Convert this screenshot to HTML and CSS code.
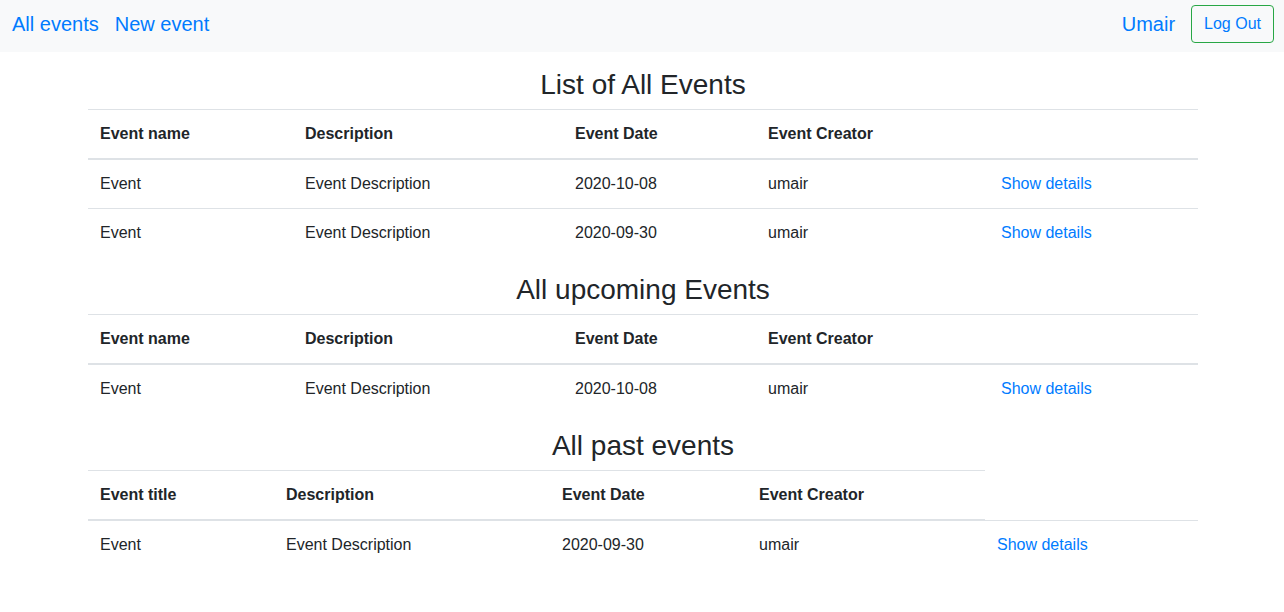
FILE: index.html
```html
<!DOCTYPE html>
<html lang="en">
<head>
<meta charset="utf-8">
<title>Events</title>
<link rel="stylesheet" href="styles.css">
</head>
<body>
<nav class="navbar">
  <div class="nav-left">
    <a class="nav-link" href="#">All events</a>
    <a class="nav-link" href="#">New event</a>
  </div>
  <div class="nav-right">
    <a class="nav-link" href="#">Umair</a>
    <button class="btn-logout" type="button">Log Out</button>
  </div>
</nav>
<main class="container">
  <h4 class="section-title">List of All Events</h4>
  <table class="table">
    <colgroup>
      <col class="a1"><col class="a2"><col class="a3"><col class="a4"><col class="a5">
    </colgroup>
    <thead>
      <tr><th>Event name</th><th>Description</th><th>Event Date</th><th>Event Creator</th><th></th></tr>
    </thead>
    <tbody>
      <tr><td>Event</td><td>Event Description</td><td>2020-10-08</td><td>umair</td><td><a href="#">Show details</a></td></tr>
      <tr><td>Event</td><td>Event Description</td><td>2020-09-30</td><td>umair</td><td><a href="#">Show details</a></td></tr>
    </tbody>
  </table>

  <h4 class="section-title">All upcoming Events</h4>
  <table class="table">
    <colgroup>
      <col class="a1"><col class="a2"><col class="a3"><col class="a4"><col class="a5">
    </colgroup>
    <thead>
      <tr><th>Event name</th><th>Description</th><th>Event Date</th><th>Event Creator</th><th></th></tr>
    </thead>
    <tbody>
      <tr><td>Event</td><td>Event Description</td><td>2020-10-08</td><td>umair</td><td><a href="#">Show details</a></td></tr>
    </tbody>
  </table>

  <h4 class="section-title">All past events</h4>
  <table class="table">
    <colgroup>
      <col class="b1"><col class="b2"><col class="b3"><col class="b4"><col class="b5">
    </colgroup>
    <thead>
      <tr><th>Event title</th><th>Description</th><th>Event Date</th><th>Event Creator</th></tr>
    </thead>
    <tbody>
      <tr><td>Event</td><td>Event Description</td><td>2020-09-30</td><td>umair</td><td><a href="#">Show details</a></td></tr>
    </tbody>
  </table>
</main>
</body>
</html>
```
FILE: styles.css
```css
* { box-sizing: border-box; }
html, body { margin: 0; padding: 0; }
body {
  font-family: "Liberation Sans", Arial, sans-serif;
  font-size: 16px;
  line-height: 1.5;
  color: #212529;
  background: #fff;
}
a { color: #007bff; text-decoration: none; }

.navbar {
  height: 52px;
  background: #f8f9fa;
  display: flex;
  align-items: center;
  justify-content: space-between;
  padding: 0 11px 4px 4px;
}
.nav-left, .nav-right { display: flex; align-items: center; }
.nav-right { margin-right: -1px; padding-left: 1px; }
.nav-link {
  font-size: 20px;
  line-height: 30px;
  padding: 0 8px;
  color: #007bff;
}
.btn-logout {
  margin-left: 8px;
  font-family: "Liberation Sans", Arial, sans-serif;
  font-size: 16px;
  line-height: 24px;
  padding: 6px 12px;
  color: #007bff;
  background: transparent;
  border: 1px solid #28a745;
  border-radius: 4px;
  cursor: pointer;
}

.container {
  width: 1112px;
  margin: 0 auto;
  padding: 16px 0 0 2px;
}
.section-title {
  margin: 0 0 8px;
  font-size: 28px;
  font-weight: 500;
  line-height: 33px;
  text-align: center;
}
.table {
  width: 100%;
  border-collapse: collapse;
  table-layout: fixed;
  margin-bottom: 16px;
}
.table th, .table td {
  padding: 12px;
  text-align: left;
  vertical-align: top;
  border-top: 1px solid #dee2e6;
  white-space: nowrap;
}
.table th { font-weight: 700; }
.table thead th { border-bottom: 2px solid #dee2e6; vertical-align: bottom; }

.a1 { width: 205px; }
.a2 { width: 270px; }
.a3 { width: 193px; }
.a4 { width: 233px; }
.a5 { width: 209px; }
.b1 { width: 186px; }
.b2 { width: 276px; }
.b3 { width: 197px; }
.b4 { width: 238px; }
.b5 { width: 213px; }
```
